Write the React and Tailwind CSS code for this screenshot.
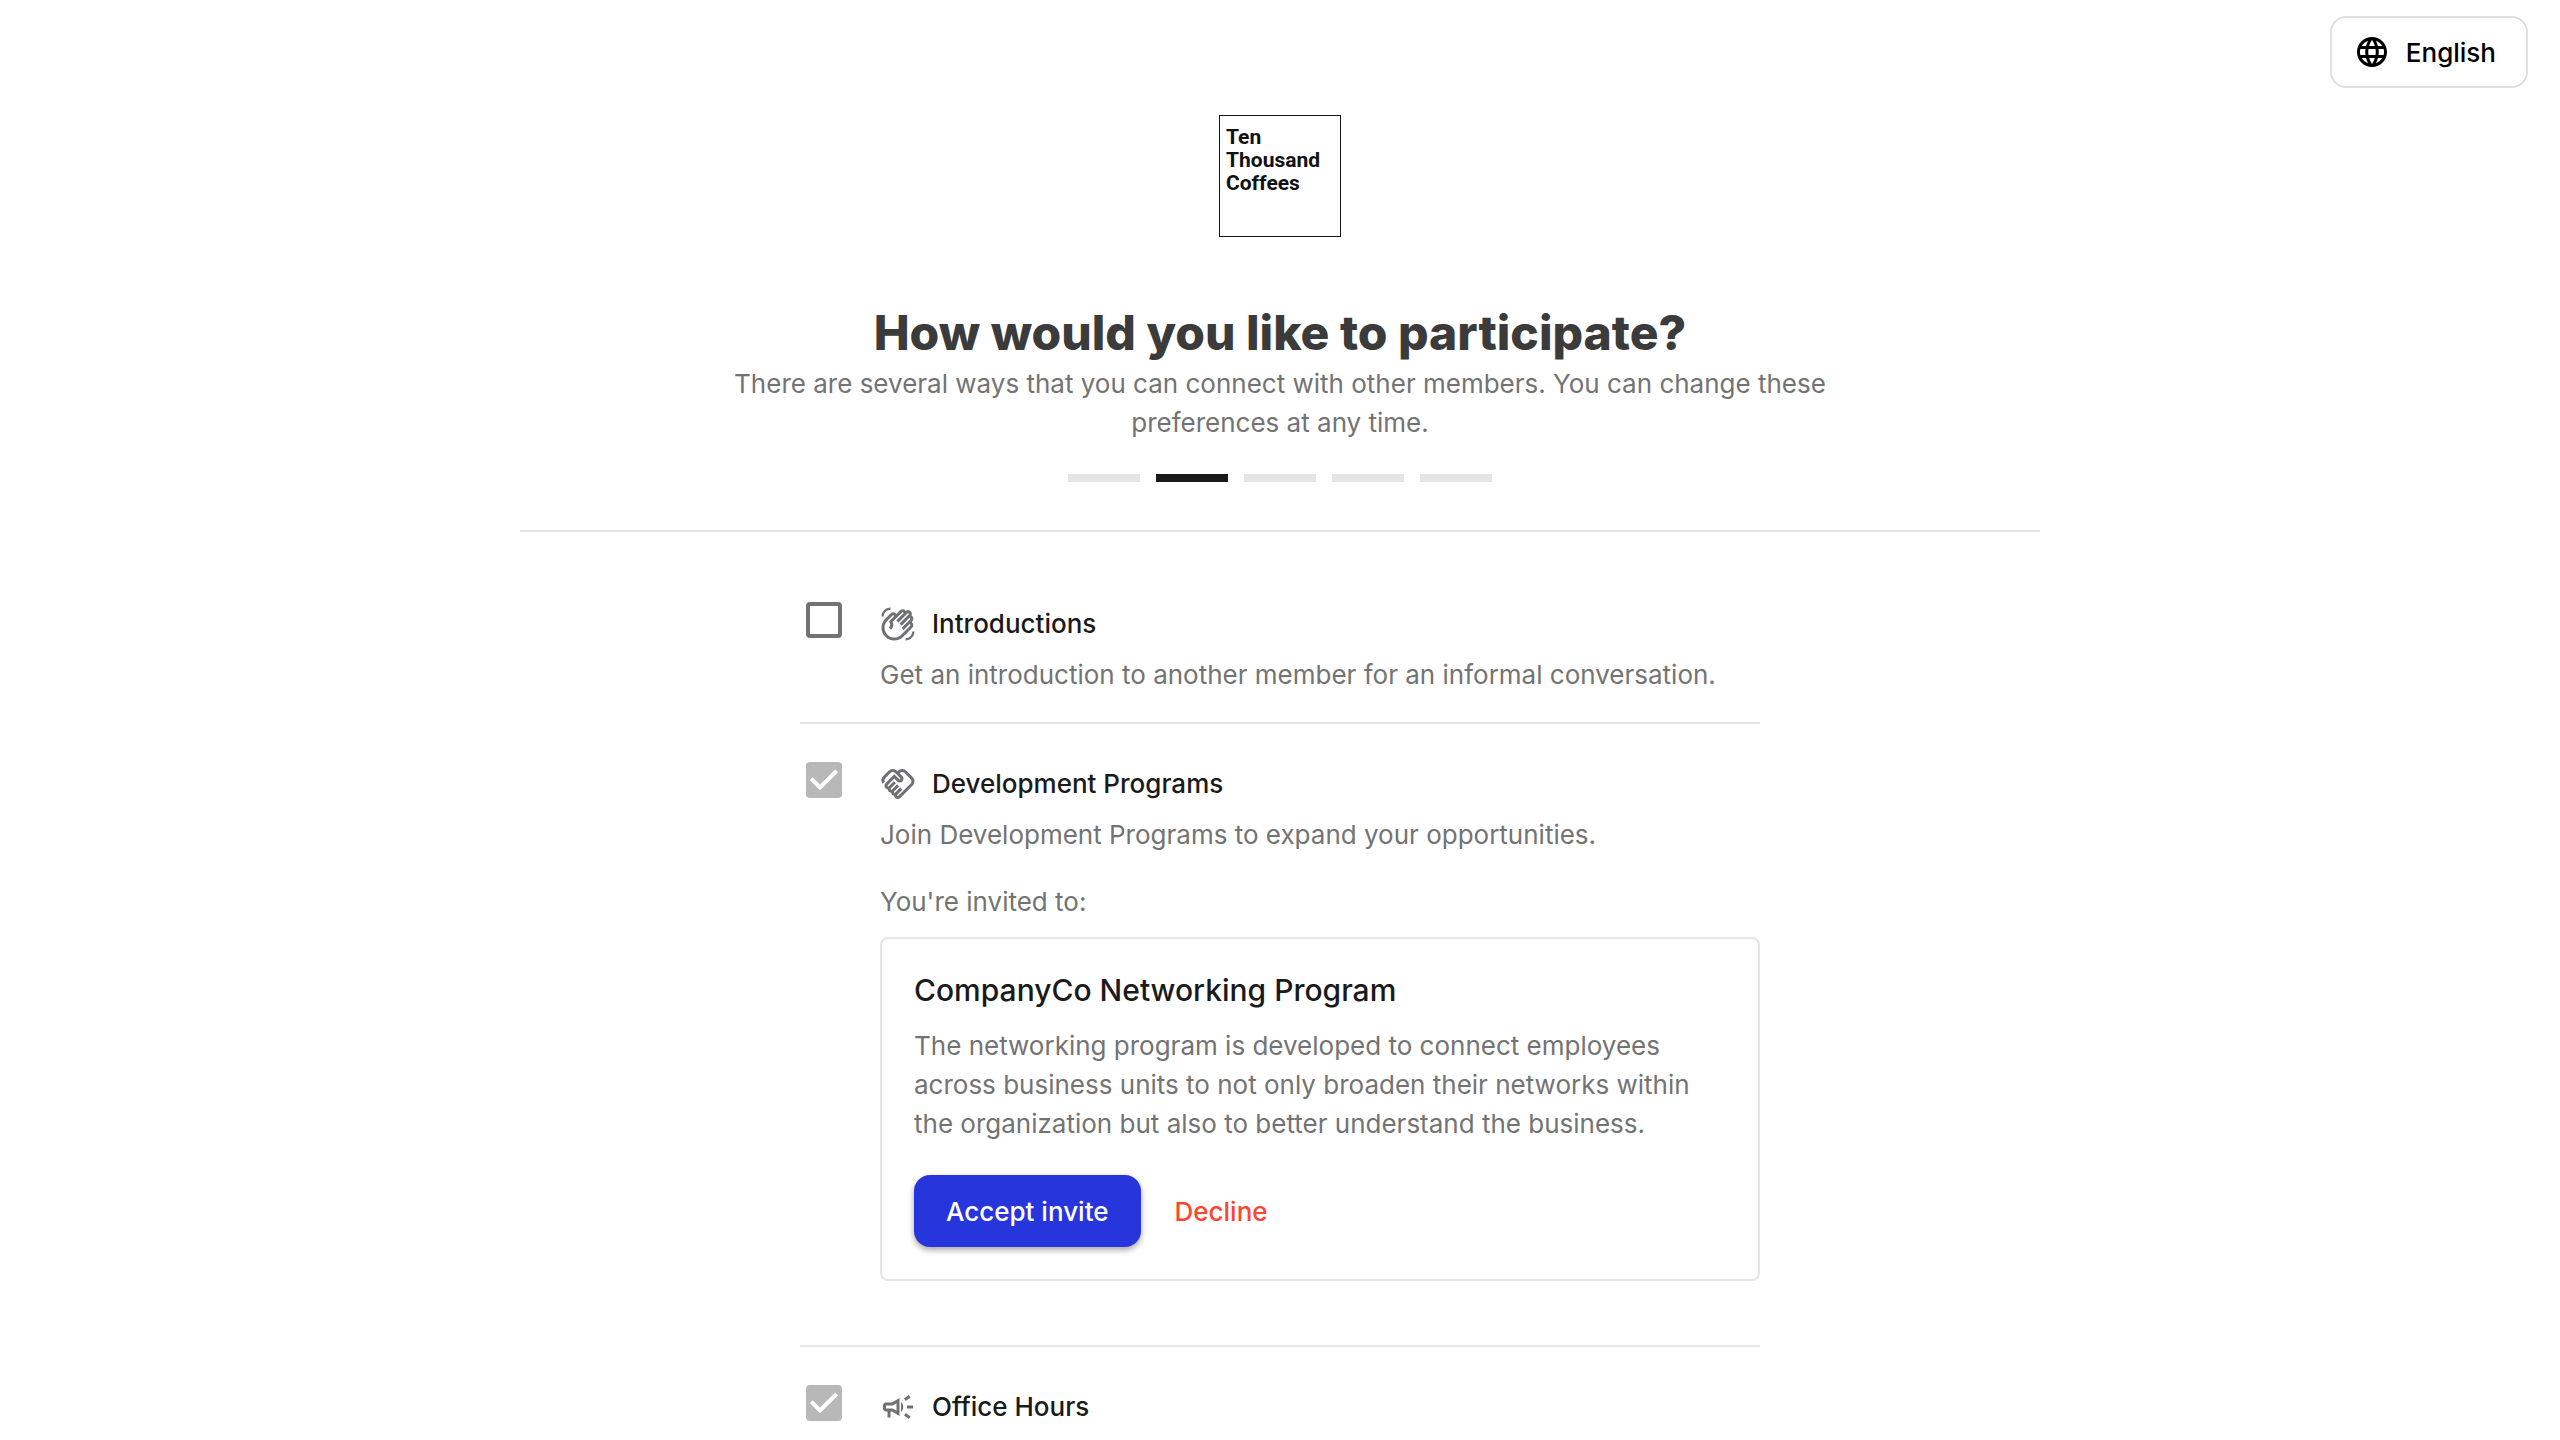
import React, { useState } from 'react';
import { MdLanguage, MdOutlineWavingHand, MdOutlineHandshake, MdOutlineCampaign } from 'react-icons/md';

const STEPS = [1, 2, 3, 4, 5];
const CURRENT_STEP = 2;

function Logo() {
    return (
        <div className="w-[122px] h-[122px] border border-[#111] px-[6px] pt-[10px] font-[Roboto,sans-serif] font-bold text-[21px] leading-[23px] text-[#111]">
            Ten<br />Thousand<br />Coffees
        </div>
    );
}

function Progress() {
    return (
        <div className="flex gap-4 mt-8">
            {STEPS.map((step) => (
                <div
                    key={step}
                    className={step === CURRENT_STEP ? 'w-[72px] h-2 bg-[#1a1a1a]' : 'w-[72px] h-2 bg-[#e5e5e5]'}
                />
            ))}
        </div>
    );
}

function Checkbox({ id, ...props }) {
    return (
        <span className="grid shrink-0 w-9 h-9 mt-[38px] ml-[6px]">
            <input
                id={id}
                type="checkbox"
                className="peer col-start-1 row-start-1 appearance-none w-9 h-9 rounded border-4 border-[#737373] bg-white checked:border-[#b8b8b8] checked:bg-[#b8b8b8]"
                {...props}
            />
            <svg viewBox="0 0 36 36" className="col-start-1 row-start-1 w-9 h-9 hidden peer-checked:block pointer-events-none" fill="none" stroke="#fff" strokeWidth="4">
                <path d="M5.2 16.8 14 25.4 30.6 9" />
            </svg>
        </span>
    );
}

function Option({ id, icon, title, description, checkbox, className = 'pb-7', children }) {
    return (
        <li className={`flex border-b-2 border-[#e5e5e5] last:border-b-0 ${className}`}>
            <Checkbox id={id} {...checkbox} />
            <div className="flex-1 pl-[38px] pt-10">
                <label htmlFor={id} className="flex items-center gap-4 h-[39px] font-medium text-[#1a1a1a]">
                    <span className="text-[36px] text-[#6f7074]">{icon}</span>
                    {title}
                </label>
                {description && <p className="mt-3">{description}</p>}
                {children}
            </div>
        </li>
    );
}

function Invite() {
    return (
        <section className="mt-4 p-8 border-2 border-[#e5e5e5] rounded-lg">
            <h2 className="text-[30px] leading-[39px] font-medium text-[#1a1a1a]">CompanyCo Networking Program</h2>
            <p className="mt-4">
                The networking program is developed to connect employees across business units to not only broaden their networks within the organization but also to better understand the business.
            </p>
            <div className="flex gap-0.5 mt-8">
                <button className="h-[72px] px-8 rounded-2xl bg-[#2735dd] text-white font-medium shadow-[0_3px_6px_rgba(0,0,0,0.35)]">
                    Accept invite
                </button>
                <button className="h-[72px] px-8 rounded-2xl text-[#ff4530] font-medium">Decline</button>
            </div>
        </section>
    );
}

export default function App() {
    const [introductions, setIntroductions] = useState(false);

    return (
        <div className="bg-white font-[Inter,sans-serif] text-[26px] leading-[39px] text-[#737373]">
            <header className="flex justify-end pt-4 pr-8">
                <button className="flex items-center gap-4 h-[72px] pl-[22px] pr-[30px] border-2 border-[#e0e0e0] rounded-2xl font-medium text-black">
                    <MdLanguage className="text-[36px]" />
                    English
                </button>
            </header>
            <main className="flex flex-col items-center px-8 pt-[27px]">
                <Logo />
                <h1 className="mt-16 text-[48px] leading-[63px] font-extrabold text-[#3b3b3b]">
                    How would you like to participate?
                </h1>
                <p className="max-w-[1120px] text-center">
                    There are several ways that you can connect with other members. You can change these preferences at any time.
                </p>
                <Progress />
                <hr className="w-full max-w-[1520px] mt-12 border-t-2 border-[#e5e5e5]" />
                <ul className="w-full max-w-[960px] pt-8">
                    <Option
                        id="introductions"
                        icon={<MdOutlineWavingHand />}
                        title="Introductions"
                        description="Get an introduction to another member for an informal conversation."
                        checkbox={{ checked: introductions, onChange: (e) => setIntroductions(e.target.checked) }}
                    />
                    <Option
                        id="programs"
                        icon={<MdOutlineHandshake />}
                        title="Development Programs"
                        description="Join Development Programs to expand your opportunities."
                        checkbox={{ defaultChecked: true, disabled: true }}
                        className="pb-16"
                    >
                        <p className="mt-7">You're invited to:</p>
                        <Invite />
                    </Option>
                    <Option
                        id="office-hours"
                        icon={<MdOutlineCampaign />}
                        title="Office Hours"
                        checkbox={{ defaultChecked: true, disabled: true }}
                        className="pb-0"
                    />
                </ul>
            </main>
        </div>
    );
}
